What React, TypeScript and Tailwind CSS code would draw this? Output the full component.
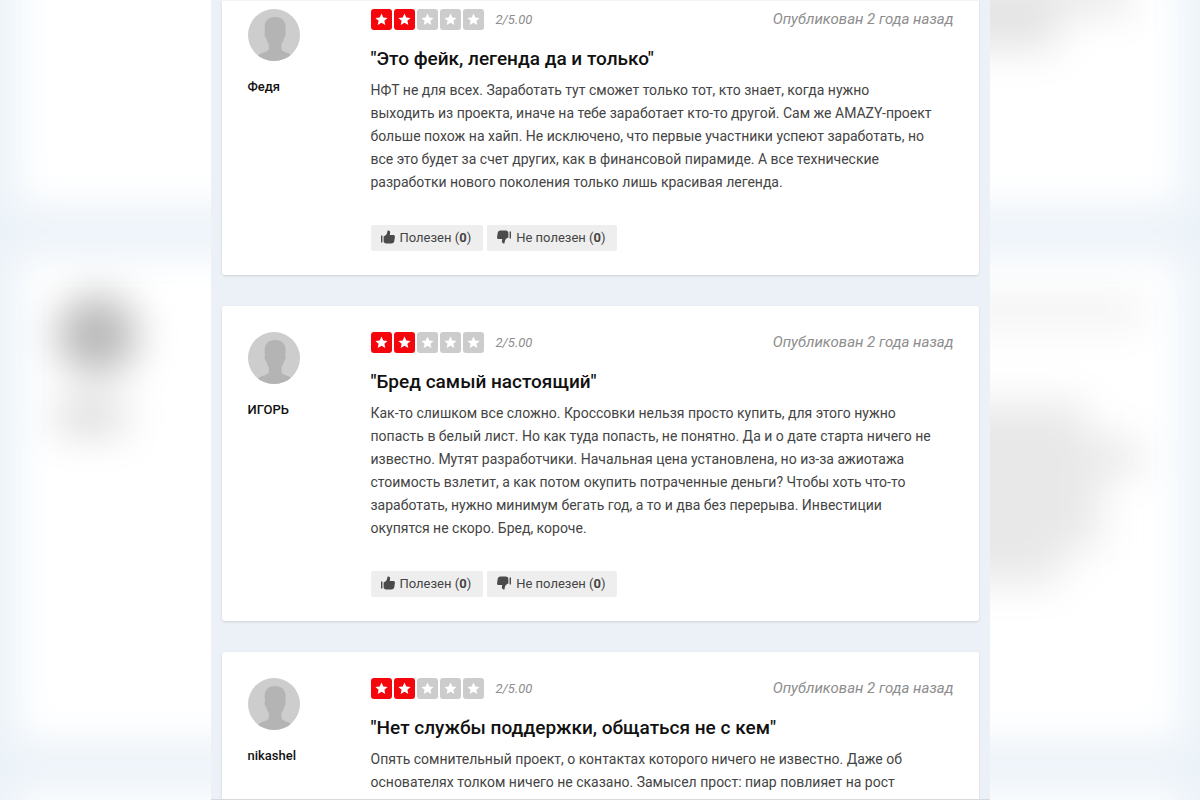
import { ReactNode } from "react";

type Review = {
  author: string;
  rating: number;
  title: string;
  lines: string[];
  preview?: boolean;
};

const reviews: Review[] = [
  {
    author: "Федя",
    rating: 2,
    title: "Это фейк, легенда да и только",
    lines: [
      "НФТ не для всех. Заработать тут сможет только тот, кто знает, когда нужно",
      "выходить из проекта, иначе на тебе заработает кто-то другой. Сам же AMAZY-проект",
      "больше похож на хайп. Не исключено, что первые участники успеют заработать, но",
      "все это будет за счет других, как в финансовой пирамиде. А все технические",
      "разработки нового поколения только лишь красивая легенда.",
    ],
  },
  {
    author: "ИГОРЬ",
    rating: 2,
    title: "Бред самый настоящий",
    lines: [
      "Как-то слишком все сложно. Кроссовки нельзя просто купить, для этого нужно",
      "попасть в белый лист. Но как туда попасть, не понятно. Да и о дате старта ничего не",
      "известно. Мутят разработчики. Начальная цена установлена, но из-за ажиотажа",
      "стоимость взлетит, а как потом окупить потраченные деньги? Чтобы хоть что-то",
      "заработать, нужно минимум бегать год, а то и два без перерыва. Инвестиции",
      "окупятся не скоро. Бред, короче.",
    ],
  },
  {
    author: "nikashel",
    rating: 2,
    title: "Нет службы поддержки, общаться не с кем",
    lines: [
      "Опять сомнительный проект, о контактах которого ничего не известно. Даже об",
      "основателях толком ничего не сказано. Замысел прост: пиар повлияет на рост",
    ],
    preview: true,
  },
];

const Avatar = () => (
  <svg viewBox="0 0 52 52" className="size-[52px] rounded-full" aria-hidden="true">
    <rect width="52" height="52" fill="#cdcdcd" />
    <path
      d="M27 8c-6.500 0-10.500 4-10.300 10 0 2 .2 3.800.4 5.500-1.200.5-.5 4.500 1.200 5.500.5 2.800 1.300 4.600 2.500 6v5c-.5 3.500-8.500 3-11.800 7.500V52h36v-4.500c-3.500-4.500-11-4-11.500-7.500v-5c1.200-1.400 2-3.200 2.500-6 1.700-1 2.400-5 1.200-5.500.2-1.700.4-3.500.4-5.500C37.800 12 33.500 8 27 8z"
      fill="#b4b4b4"
    />
  </svg>
);

const ThumbIcon = ({ down = false }) => (
  <svg
    viewBox="0 0 14 14"
    className={down ? "mb-[2px] size-[14px] rotate-180" : "mb-[2px] size-[14px]"}
    fill="#4b4b4b"
    aria-hidden="true"
  >
    <path d="M0 5.500h1.400v7H0z" />
    <path d="M2.600 6.500c1.900-.6 3.300-1.900 3.600-3.900L6.500.7c1.500-.6 2.800.5 2.600 2L8.800 4.900h3.300c1.400 0 2 .9 1.800 2l-.6 4.200c-.2 1.600-1.200 2.500-2.800 2.500H6.300c-2 0-3.700-.6-3.700-2.300z" />
  </svg>
);

const Stars = ({ rating }: { rating: number }) => (
  <div className="flex gap-[2px]" role="img" aria-label={`${rating} из 5`}>
    {[1, 2, 3, 4, 5].map((n) => (
      <svg key={n} viewBox="0 0 21 21" className="size-[21px]">
        <rect width="21" height="21" rx="3" fill={n <= rating ? "#f4060c" : "#cccccc"} />
        <path
          d="M10.500 4.500l1.800 4 4.300.4-3.200 2.900.9 4.200-3.800-2.200-3.800 2.200.9-4.200-3.200-2.900 4.300-.4z"
          fill="#fff"
        />
      </svg>
    ))}
  </div>
);

const VoteButton = ({ icon, label }: { icon: ReactNode; label: string }) => (
  <button
    type="button"
    className="flex h-[26px] items-center gap-[5px] rounded-[2px] bg-[#eeeeee] pr-3 pl-[10px] text-[13px] text-[#444444]"
  >
    {icon}
    <span>
      {label} (<b>0</b>)
    </span>
  </button>
);

const ReviewCard = ({ review, first }: { review: Review; first: boolean }) => (
  <article
    className={
      first
        ? "flex rounded-b-[3px] border-t border-[#f3f3f3] bg-white pt-2 pr-[25px] pb-6 pl-[26px] shadow-sm"
        : "flex flex-none rounded-[3px] bg-white pt-[26px] pr-[25px] pb-6 pl-[26px] shadow-sm"
    }
  >
    <div className="w-[123px] shrink-0">
      <Avatar />
      <p className="mt-4 text-[13px] leading-[20px] font-medium text-[#111111]">{review.author}</p>
    </div>
    <div className="min-w-0 flex-1">
      <div className="flex h-[21px] items-center justify-between">
        <div className="flex items-center gap-3">
          <Stars rating={review.rating} />
          <span className="text-[13px] text-[#8d8d8d] italic">{review.rating}/5.00</span>
        </div>
        <time className="text-[15px] text-[#8d8d8d] italic">Опубликован 2 года назад</time>
      </div>
      <h2 className="mt-[17px] text-[19px] leading-[24px] font-medium text-[#111111]">"{review.title}"</h2>
      <p className="mt-2 text-[14px] leading-[23px] text-[#444444] sm:whitespace-pre-line">
        {review.lines.join("\n")}
      </p>
      {!review.preview && (
        <div className="mt-[31px] flex gap-1">
          <VoteButton icon={<ThumbIcon />} label="Полезен" />
          <VoteButton icon={<ThumbIcon down />} label="Не полезен" />
        </div>
      )}
    </div>
  </article>
);

// Enlarged, blurred cards behind the main column
const Backdrop = () => (
  <div className="absolute -inset-y-20 inset-x-0 flex flex-col gap-12 px-[17px] blur-[20px]" aria-hidden="true">
    <div className="flex h-[287px] shrink-0 flex-col items-end bg-white pt-14">
      <div className="mr-[54px] h-9 w-1/2 bg-[#e6e6e6]" />
      <div className="mr-[126px] h-9 w-1/2 bg-[#e2e2e2]" />
    </div>
    <div className="flex h-[487px] shrink-0 justify-between bg-white pt-10">
      <div className="flex flex-col gap-7 pl-10">
        <div className="size-20 rounded-full bg-[#b8b8b8]" />
        <div className="h-7 w-[66px] bg-[#d2d2d2]" />
      </div>
      <div className="flex w-1/2 flex-col items-end">
        <div className="mt-1 mr-10 mb-20 h-6 w-4/5 bg-[#eeeeee]" />
        <div className="mr-[98px] h-9 w-4/5 bg-[#e8e8e8]" />
        <div className="mr-[43px] h-9 w-4/5 bg-[#e8e8e8]" />
        <div className="mr-[85px] h-9 w-4/5 bg-[#e8e8e8]" />
        <div className="mr-[83px] h-9 w-4/5 bg-[#e8e8e8]" />
        <div className="mr-[122px] h-9 w-4/5 bg-[#e8e8e8]" />
      </div>
    </div>
    <div className="flex-1 bg-white" />
  </div>
);

export default function App() {
  return (
    <div className="relative h-screen overflow-hidden bg-[#ebf2f9] font-['Roboto','Liberation_Sans',sans-serif]">
      <Backdrop />
      <main className="relative mx-auto flex h-full max-w-[779px] flex-col gap-[31px] overflow-hidden border-b border-[#d5dadd] bg-[#ebf1f6] px-[11px]">
        {reviews.map((review, i) => (
          <ReviewCard key={review.author} review={review} first={i === 0} />
        ))}
      </main>
    </div>
  );
}
